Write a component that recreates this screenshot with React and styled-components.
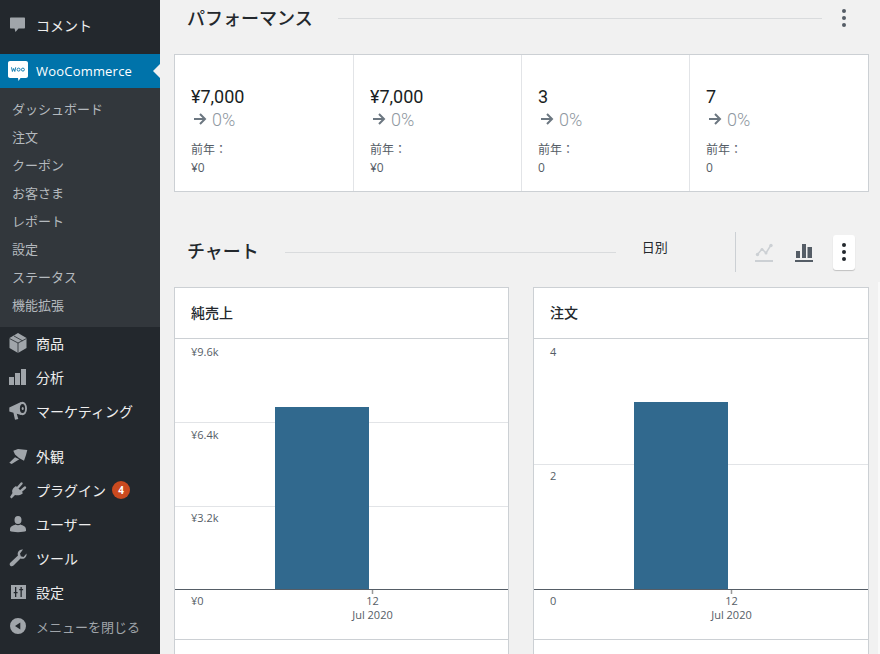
import React from 'react';
import styled, { createGlobalStyle } from 'styled-components';

const JP = `"Segoe UI", "Open Sans", "Noto Sans CJK JP", sans-serif`;

const Global = createGlobalStyle`
  html, body { margin: 0; padding: 0; background: #f1f1f1; }
  body { font-family: ${JP}; font-size: 13px; color: #23282d; }
  * { box-sizing: border-box; }
`;

const Page = styled.div`
  display: flex;
  width: 880px;
  height: 654px;
  overflow: hidden;
`;

const Sidebar = styled.nav`
  flex: 0 0 160px;
  background: #23282d;
  padding-top: 8px;
  display: flex;
  flex-direction: column;
`;

const MenuItem = styled.div`
  display: flex;
  align-items: center;
  height: 34px;
  padding-left: 8px;
  padding-bottom: ${p => (p.$lift ? 2 : 0)}px;
  font-size: ${p => (p.$dim ? 13 : 14)}px;
  color: ${p => (p.$dim ? '#a0a5aa' : '#eeeeee')};
  margin-top: ${p => p.$gap || 0}px;
  flex: none;
`;

const IconSlot = styled.span`
  flex: 0 0 20px;
  width: 20px;
  height: 20px;
  margin-right: 8px;
  color: #a0a5aa;
  display: flex;
  align-items: center;
  justify-content: center;
  svg { display: block; }
`;

const ActiveItem = styled(MenuItem)`
  position: relative;
  background: #0073aa;
  color: #fff;
  font-size: 13px;
  letter-spacing: .2px;
  margin-top: 12px;
  &::after {
    content: '';
    position: absolute;
    right: 0;
    top: 10px;
    border: 7px solid transparent;
    border-right-color: #f1f1f1;
    border-left-width: 0;
  }
`;

const Submenu = styled.div`
  background: #32373c;
  padding: 7px 0 8px;
  display: flex;
  flex-direction: column;
`;

const SubItem = styled.div`
  height: 28px;
  line-height: 28px;
  padding-left: 12px;
  font-size: 13px;
  color: #b4b9be;
`;

const Badge = styled.span`
  display: inline-flex;
  align-items: center;
  justify-content: center;
  width: 18px;
  height: 18px;
  margin-left: 6px;
  border-radius: 50%;
  background: #ca4a1f;
  color: #fff;
  font-size: 10px;
  font-weight: 700;
  font-family: "Open Sans", sans-serif;
`;

const Main = styled.main`
  flex: 1;
  min-width: 0;
  padding: 0 11px 0 14px;
`;

const SectionHead = styled.div`
  display: flex;
  align-items: center;
  height: ${p => p.$h}px;
  margin-top: ${p => p.$top}px;
`;

const Title = styled.h2`
  margin: 0 0 ${p => p.$lift || 0}px ${p => p.$indent}px;
  font-size: 18px;
  font-weight: 500;
  line-height: 24px;
  color: #23282d;
  white-space: nowrap;
`;

const Rule = styled.div`
  height: 1px;
  background: #d9dbdd;
  width: ${p => p.$w}px;
  margin-left: ${p => p.$ml}px;
  flex: none;
`;

const Dots = styled.span`
  display: flex;
  flex-direction: column;
  align-items: center;
  gap: 3px;
  i {
    display: block;
    width: 4px;
    height: 4px;
    border-radius: 50%;
    background: ${p => p.$color || '#555d66'};
  }
`;

const HeadDots = styled.div`
  margin-left: 20px;
  width: 4px;
  display: flex;
`;

const StatCard = styled.section`
  display: grid;
  grid-template-columns: 178px 168px 168px 1fr;
  height: 138px;
  margin-top: 18px;
  background: #fff;
  border: 1px solid #ccd0d4;
`;

const Stat = styled.div`
  padding: 31px 16px 0;
  & + & { border-left: 1px solid #e2e4e7; }
`;

const StatValue = styled.div`
  font-size: 18px;
  line-height: 22px;
  color: #191e23;
  font-family: "Roboto", "Open Sans", sans-serif;
`;

const StatDelta = styled.div`
  display: flex;
  align-items: center;
  height: 22px;
  font-size: 18px;
  font-weight: 300;
  color: #8f98a1;
  font-family: "Roboto", sans-serif;
  svg { margin: 0 4px 0 1px; color: #6c7781; }
`;

const StatPrev = styled.div`
  margin-top: 11px;
  font-size: 12px;
  line-height: 18px;
  color: #555d66;
`;

const StatPrevValue = styled.div`
  font-size: 12px;
  line-height: 18px;
  color: #555d66;
  font-family: "Open Sans", sans-serif;
`;

const Interval = styled.span`
  flex: none;
  margin: 0 0 12px 26px;
  font-size: 13px;
  color: #23282d;
`;

const VDivider = styled.div`
  flex: none;
  width: 1px;
  height: 40px;
  background: #ccd0d4;
  margin-left: 67px;
`;

const TypeIcon = styled.span`
  flex: none;
  width: 20px;
  height: 20px;
  margin-left: ${p => p.$ml}px;
  color: ${p => (p.$active ? '#555d66' : '#ccd0d4')};
  svg { display: block; }
`;

const MoreButton = styled.div`
  flex: none;
  width: 22px;
  height: 35px;
  margin-left: 18px;
  display: flex;
  align-items: center;
  justify-content: center;
  background: #fff;
  border-radius: 3px;
  box-shadow: 0 1px 1px rgba(0,0,0,.2);
`;

const ChartGrid = styled.div`
  display: grid;
  grid-template-columns: 335px 336px 100px;
  column-gap: 24px;
  margin-top: 15px;
`;

const ChartCard = styled.section`
  background: #fff;
  border: 1px solid #ccd0d4;
  border-bottom: 0;
  height: 380px;
`;

const NextCard = styled.div`
  margin: -5px 0 0 -15px;
  height: 385px;
  background: #f9f9f9;
`;

const ChartHead = styled.header`
  height: 51px;
  padding: 0 0 2px 16px;
  display: flex;
  align-items: center;
  border-bottom: 1px solid #ccd0d4;
  font-size: 14px;
  font-weight: 500;
  color: #23282d;
`;

const ChartBody = styled.div`
  height: 301px;
  border-bottom: 1px solid #ccd0d4;
  svg { display: block; }
  text { font-family: "Open Sans", "Noto Sans CJK JP", sans-serif; font-size: 11px; fill: #555d66; }
`;

const I = {
  comment: <svg width="20" height="20" viewBox="0 0 20 20"><path fill="currentColor" d="M3 2.500h13c.6 0 1 .4 1 1v9c0 .6-.4 1-1 1h-5.500l-3 3.500-1-3.500H3c-.6 0-1-.4-1-1v-9c0-.6.4-1 1-1z"/></svg>,
  woo: <svg width="20" height="20" viewBox="0 0 20 20"><path fill="#fff" d="M2 0h16c1.100 0 2 .9 2 2v13c0 1.100-.9 2-2 2h-5.500l-2 3-.5-3H2c-1.100 0-2-.9-2-2V2C0 .9.9 0 2 0z"/><path fill="none" stroke="#0073aa" strokeWidth=".9" d="M3.500 6.300l.9 4.200 1.200-3 1.200 3 .9-4.200"/><circle cx="10.600" cy="8.600" r="1.500" fill="none" stroke="#0073aa" strokeWidth=".9"/><circle cx="14.900" cy="8.600" r="1.500" fill="none" stroke="#0073aa" strokeWidth=".9"/></svg>,
  box: <svg width="20" height="20" viewBox="0 0 20 20"><path fill="currentColor" d="M10 0l8.500 5v10L10 20l-8.500-5V5z"/><path fill="none" stroke="#23282d" strokeWidth=".8" d="M1.500 5.500L10 10l8.500-4.500M10 10v10M6 3l8.500 4.800"/></svg>,
  bars: <svg width="20" height="20" viewBox="0 0 20 20"><path fill="currentColor" d="M1 10h5v8H1zM7 6h5v12H7zM13 2h5v16h-5z"/></svg>,
  mega: <svg width="20" height="20" viewBox="0 0 20 20"><path fill="currentColor" d="M1.300 6.500L13 1v13L1.300 10.500zM5.300 11.300l3.300 1 1.700 5.700-3.300.7z"/><ellipse cx="14.500" cy="7.500" rx="4.500" ry="6.800" fill="currentColor"/><ellipse cx="14.500" cy="7.500" rx="2.600" ry="4.500" fill="#23282d"/><ellipse cx="14.700" cy="7.500" rx="1" ry="1.600" fill="currentColor"/></svg>,
  brush: <svg width="20" height="20" viewBox="0 0 20 20"><path fill="currentColor" d="M5.300 4.700L10 3l9.300 1-1.300 5-2 5.700-5-2.700-4-3.500zM7 11.300l4.300 2L3.700 18l-2.400-1.300z"/></svg>,
  plug: <svg width="20" height="20" viewBox="0 0 20 20"><path fill="currentColor" d="M8 6l7 7c-1.500 1.800-5 3-8 2l-3.500 3.500L2 17l2.500-4C3.500 10 5 8 8 6z"/><path fill="none" stroke="currentColor" strokeWidth="2.400" strokeLinecap="round" d="M10 7.500L13.500 3.500M13 11l4-3.500"/></svg>,
  user: <svg width="20" height="20" viewBox="0 0 20 20"><ellipse cx="10" cy="6" rx="3.500" ry="4" fill="currentColor"/><path fill="currentColor" d="M2 15.500C2 12.500 5 11.500 7.500 10.500c1.500 1 3.500 1 5 0 2.500 1 5.500 2 5.500 5V17c-2 1.500-14 1.500-16 0z"/></svg>,
  wrench: <svg width="20" height="20" viewBox="0 0 20 20"><path fill="currentColor" d="M18.500 5.500c.3 2-.5 3.800-2 4.700-1.300.8-2.800.8-4 .3L5.500 17.500c-1 1-2.300 1-3.200.2-.9-.9-.8-2.300.2-3.200l7.500-7c-.5-1.300-.4-2.800.4-4 1-1.500 2.700-2.300 4.600-2L12 5.500l.8 2.700 2.700.7 3-3.400z"/></svg>,
  sliders: <svg width="20" height="20" viewBox="0 0 20 20"><path fill="currentColor" fillRule="evenodd" d="M3 3h15v14H3zM7 5v5H5.700v1.300H7V15h1.300v-3.700h1.300V10H8.300V5zM12.500 5v2h-1.300v1.300h1.300V15h1.300V8.300h1.300V7h-1.300V5z"/></svg>,
  collapse: <svg width="20" height="20" viewBox="0 0 20 20"><path fill="currentColor" fillRule="evenodd" d="M10 2a8 8 0 110 16 8 8 0 010-16zm2.300 4.500L7 10l5.300 3.500z"/></svg>,
  arrow: <svg width="16" height="16" viewBox="0 0 16 16"><path fill="none" stroke="currentColor" strokeWidth="2" d="M2 8h11M8 3l5 5-5 5"/></svg>,
  line: <svg width="20" height="20" viewBox="0 0 20 20"><path fill="none" stroke="currentColor" strokeWidth="1.500" d="M2 13l5-6 4 4 5-8"/><circle cx="2.500" cy="12.500" r="1.700" fill="currentColor"/><circle cx="7" cy="7.500" r="1.500" fill="currentColor"/><circle cx="11" cy="11" r="1.500" fill="currentColor"/><circle cx="16" cy="3.500" r="1.700" fill="currentColor"/><path fill="currentColor" d="M0 18h18v2H0z"/></svg>,
  bar: <svg width="20" height="20" viewBox="0 0 20 20"><path fill="currentColor" d="M1 9h4v7H1zM7 2h4v14H7zM12.500 5H17v11h-4.500zM0 18h18v2H0z"/></svg>,
};

const DotStack = ({ color }) => <Dots $color={color}><i /><i /><i /></Dots>;

const stats = [['¥7,000', '¥0'], ['¥7,000', '¥0'], ['3', '0'], ['7', '0']];

const Chart = ({ width, ticks, barX, barTop }) => (
  <ChartBody>
    <svg width={width} height="300" viewBox={`0 0 ${width} 300`}>
      {ticks.map(t => t.y > 0 && t.y !== 250 && (
        <line key={t.y} x1="0" x2={width} y1={t.y + .5} y2={t.y + .5} stroke="#e2e4e7" />
      ))}
      {ticks.map(t => <text key={t.label} x="16" y={t.ty}>{t.label}</text>)}
      <rect x={barX} y={barTop} width="94" height={250 - barTop} fill="#31698e" />
      <line x1="0" x2={width} y1="250.500" y2="250.500" stroke="#555d66" />
      <line x1={barX + 97.500} x2={barX + 97.500} y1="251" y2="255" stroke="#999" strokeWidth="1.500" />
      <text x={barX + 97.500} y="266" textAnchor="middle">12</text>
      <text x={barX + 97.500} y="280" textAnchor="middle">Jul 2020</text>
    </svg>
  </ChartBody>
);

const menuTop = [['商品', I.box], ['分析', I.bars], ['マーケティング', I.mega]];

export default function App() {
  return (
    <Page>
      <Global />
      <Sidebar>
        <MenuItem><IconSlot>{I.comment}</IconSlot>コメント</MenuItem>
        <ActiveItem><IconSlot>{I.woo}</IconSlot>WooCommerce</ActiveItem>
        <Submenu>
          {['ダッシュボード', '注文', 'クーポン', 'お客さま', 'レポート', '設定', 'ステータス', '機能拡張'].map(s => <SubItem key={s}>{s}</SubItem>)}
        </Submenu>
        {menuTop.map(([t, ic]) => <MenuItem key={t} $lift><IconSlot>{ic}</IconSlot>{t}</MenuItem>)}
        <MenuItem $gap={10}><IconSlot>{I.brush}</IconSlot>外観</MenuItem>
        <MenuItem><IconSlot>{I.plug}</IconSlot>プラグイン<Badge>4</Badge></MenuItem>
        <MenuItem><IconSlot>{I.user}</IconSlot>ユーザー</MenuItem>
        <MenuItem><IconSlot>{I.wrench}</IconSlot>ツール</MenuItem>
        <MenuItem><IconSlot>{I.sliders}</IconSlot>設定</MenuItem>
        <MenuItem $dim><IconSlot>{I.collapse}</IconSlot>メニューを閉じる</MenuItem>
      </Sidebar>
      <Main>
        <SectionHead $h={36} $top={0}>
          <Title $indent={13}>パフォーマンス</Title>
          <Rule $w={484} $ml={25} />
          <HeadDots><DotStack /></HeadDots>
        </SectionHead>
        <StatCard>
          {stats.map(([v, p], i) => (
            <Stat key={i}>
              <StatValue>{v}</StatValue>
              <StatDelta>{I.arrow}0%</StatDelta>
              <StatPrev>前年：</StatPrev>
              <StatPrevValue>{p}</StatPrevValue>
            </Stat>
          ))}
        </StatCard>
        <SectionHead $h={40} $top={40}>
          <Title $indent={13} $lift={2}>チャート</Title>
          <Rule $w={331} $ml={26} />
          <Interval>日別</Interval>
          <VDivider />
          <TypeIcon $ml={19}>{I.line}</TypeIcon>
          <TypeIcon $ml={20} $active>{I.bar}</TypeIcon>
          <MoreButton><DotStack color="#23282d" /></MoreButton>
        </SectionHead>
        <ChartGrid>
          <ChartCard>
            <ChartHead>純売上</ChartHead>
            <Chart width={333} barX={100} barTop={68} ticks={[
              { y: 0, ty: 17, label: '¥9.6k' }, { y: 83, ty: 100, label: '¥6.4k' },
              { y: 167, ty: 183, label: '¥3.2k' }, { y: 250, ty: 266, label: '¥0' },
            ]} />
          </ChartCard>
          <ChartCard>
            <ChartHead>注文</ChartHead>
            <Chart width={334} barX={100} barTop={63} ticks={[
              { y: 0, ty: 17, label: '4' }, { y: 125, ty: 141, label: '2' }, { y: 250, ty: 266, label: '0' },
            ]} />
          </ChartCard>
          <NextCard />
        </ChartGrid>
      </Main>
    </Page>
  );
}
